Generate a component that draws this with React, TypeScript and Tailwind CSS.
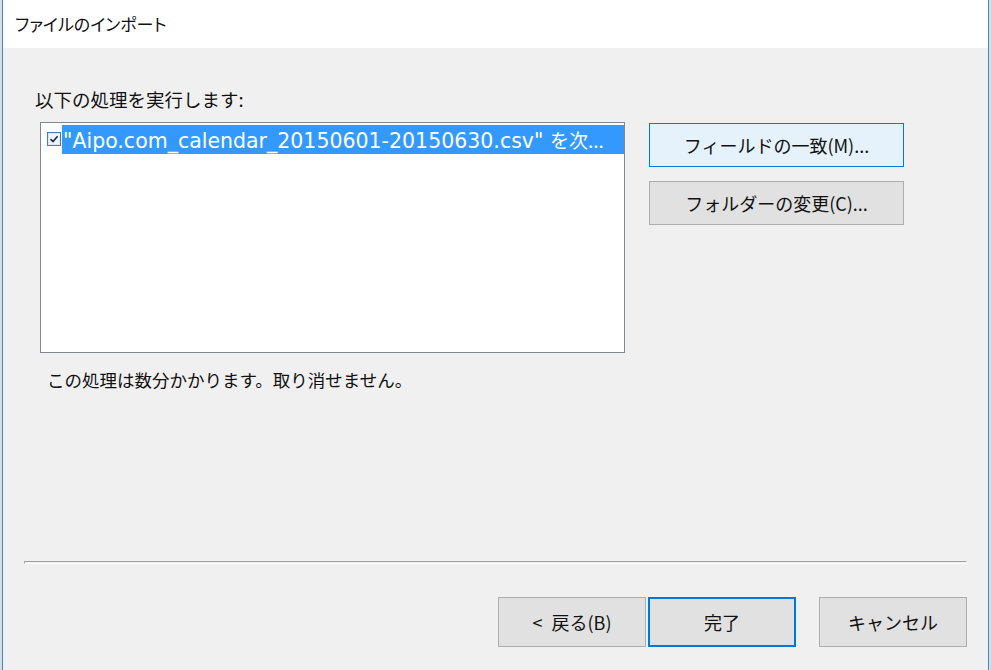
import React from "react";

const jp = "font-['Noto_Sans_CJK_JP',sans-serif]";

function CheckBox() {
  return (
    <svg width="14" height="14" viewBox="0 0 14 14" className="shrink-0">
      <rect x="0.5" y="0.5" width="13" height="13" fill="#dbe6f4" stroke="#3f7fc4" />
      <rect x="2" y="2" width="10" height="10" fill="#eef4fb" />
      <path d="M3.5 7.2 L6 9.6 L10.6 4.2" fill="none" stroke="#1d2a3a" strokeWidth="1.6" />
    </svg>
  );
}

function Button({
  children,
  className = "",
}: {
  children: React.ReactNode;
  className?: string;
}) {
  return (
    <div
      className={`flex items-center justify-center text-[18px] text-[#111] ${className}`}
    >
      {children}
    </div>
  );
}

export default function App() {
  return (
    <div className={`w-[991px] h-[670px] bg-[#d9dee2] flex overflow-hidden ${jp}`}>
      <div className="ml-[2px] w-[987px] h-full border-x border-[#3a8dc5] flex flex-col">
        {/* title bar */}
        <div className="h-[48px] bg-white flex items-center pl-[12px] pb-[1px] text-[17px] text-[#111] [font-feature-settings:'palt']">
          ファイルのインポート
        </div>

        {/* dialog body */}
        <div className="flex-1 bg-[#f0f0f0] flex flex-col pl-[21px] pb-[23px]">
          <div className="pt-[39px] pl-[11px] h-[63px] leading-[24px] text-[18.5px] text-[#111]">
            以下の処理を実行します:
          </div>

          <div className="mt-[11px] flex pl-[16px]">
            <div className="w-[585px] h-[231px] border border-[#828790] bg-white pt-[1px]">
              <div className="flex items-center h-[30px] pl-[6px]">
                <CheckBox />
                <div className="ml-[1px] flex-1 h-[29px] bg-[#3399ff] text-white text-[20.5px] leading-[29px] pl-[1px] whitespace-nowrap overflow-hidden font-['DejaVu_Sans','Noto_Sans_CJK_JP',sans-serif]">
                  "Aipo.com_calendar_20150601-20150630.csv" <span className="font-['Noto_Sans_CJK_JP',sans-serif] text-[19px]">を次...</span>
                </div>
              </div>
            </div>

            <div className="ml-[24px] mt-[1px] flex flex-col gap-[14px]">
              <Button className="w-[255px] h-[44px] bg-[#e5f1fb] border border-[#0078d7]">
                フィールドの一致(M)...
              </Button>
              <Button className="w-[255px] h-[44px] bg-[#e1e1e1] border border-[#adadad]">
                フォルダーの変更(C)...
              </Button>
            </div>
          </div>

          <div className="mt-[15px] pl-[23px] leading-[24px] text-[17.5px] text-[#111]">
            この処理は数分かかります。取り消せません。
          </div>

          <div className="flex-1" />

          {/* etched separator */}
          <div className="w-[943px] h-[3px] border border-t-[#a0a0a0] border-l-[#a0a0a0] border-b-white border-r-white" />

          <div className="mt-[33px] flex pr-[21px] justify-end">
            <Button className="w-[148px] h-[50px] bg-[#e1e1e1] border border-[#adadad]">
              <span className="mr-[9px]">&lt;</span>戻る(B)
            </Button>
            <Button className="ml-[2px] w-[148px] h-[50px] bg-[#e1e1e1] border-2 border-[#0078d7]">
              完了
            </Button>
            <Button className="ml-[23px] w-[148px] h-[50px] bg-[#e1e1e1] border border-[#adadad]">
              キャンセル
            </Button>
          </div>
        </div>
      </div>
    </div>
  );
}
